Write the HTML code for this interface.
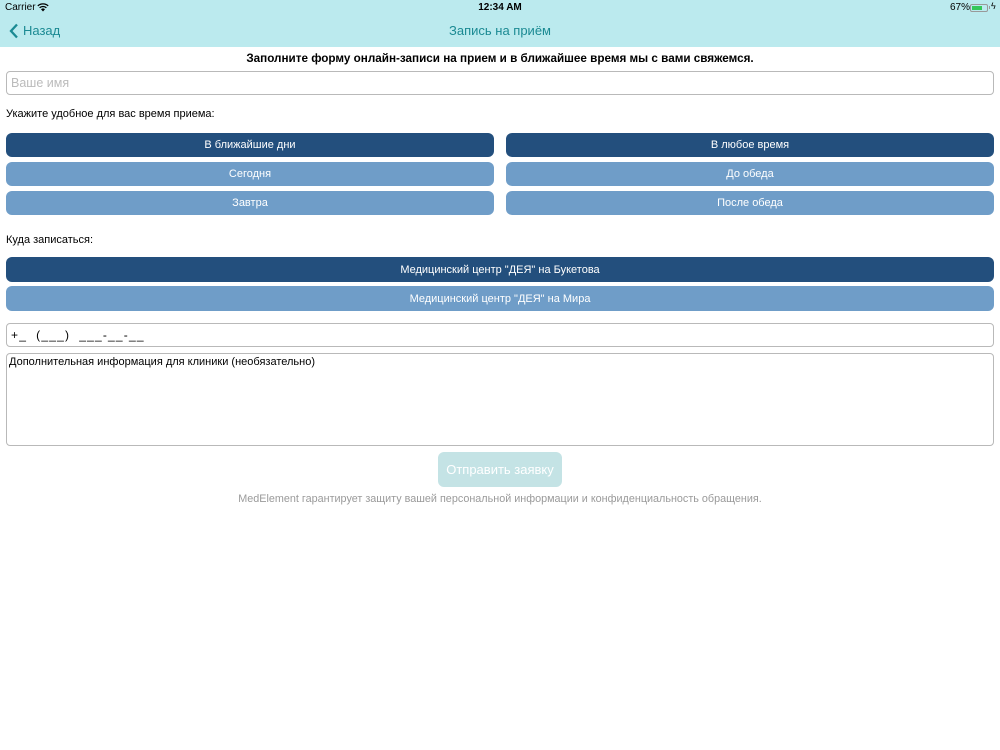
<!DOCTYPE html>
<html><head><meta charset="utf-8"><style>
*{box-sizing:border-box;margin:0;padding:0}
body{width:1000px;height:750px;background:#fff;font-family:"Liberation Sans",sans-serif;position:relative;overflow:hidden;color:#000}
.a{position:absolute}
.hdr{left:0;top:0;width:1000px;height:47px;background:#bbeaee}
.btn{position:absolute;border-radius:6px;color:#fff;font-size:11px;text-align:center;line-height:25px;height:24px}
.d{background:#234f7d}.l{background:#6f9dc8}
.inp{position:absolute;border:1px solid #b9b9b9;border-radius:4px;background:#fff}
</style></head><body>
<div class="a hdr"></div>
<div class="a" style="left:5px;top:2px;font-size:10px">Carrier</div>
<svg class="a" style="left:37px;top:3px" width="12" height="9" viewBox="0 0 12 9"><path d="M6 8.5L8 6.2A3 3 0 0 0 4 6.2Z" fill="#000"/><path d="M2.6 4.8A5 5 0 0 1 9.4 4.8M0.8 2.9A7.6 7.6 0 0 1 11.2 2.9" stroke="#000" stroke-width="1.3" fill="none"/></svg>
<div class="a" style="left:0;width:1000px;top:2px;text-align:center;font-size:10px;font-weight:bold">12:34 AM</div>
<div class="a" style="left:950px;top:2px;font-size:10px">67%</div>
<div class="a" style="left:970px;top:4px;width:18px;height:8px;border:1px solid #999;border-radius:2px"><div style="margin:1px;width:10px;height:4px;background:#34c759"></div></div>
<div class="a" style="left:989px;top:6px;width:1px;height:3px;background:#999"></div>
<div class="a" style="left:991px;top:1px;font-size:9px">ϟ</div>
<svg class="a" style="left:9px;top:23px" width="10" height="16" viewBox="0 0 10 16"><path d="M8 1.5L2 8L8 14.5" stroke="#1b8a93" stroke-width="2.3" fill="none"/></svg>
<div class="a" style="left:23px;top:23px;font-size:13px;color:#1b8a93">Назад</div>
<div class="a" style="left:0;width:1000px;top:23px;text-align:center;font-size:13px;color:#1b8a93">Запись на приём</div>
<div class="a" style="left:0;width:1000px;top:52px;text-align:center;font-size:11.7px;font-weight:bold">Заполните форму онлайн-записи на прием и в ближайшее время мы с вами свяжемся.</div>
<div class="inp" style="left:6px;top:71px;width:988px;height:24px"></div>
<div class="a" style="left:11px;top:76px;font-size:12.5px;color:#bbb">Ваше имя</div>
<div class="a" style="left:6px;top:108px;font-size:11px">Укажите удобное для вас время приема:</div>
<div class="btn d" style="left:6px;top:133px;width:488px">В ближайшие дни</div>
<div class="btn d" style="left:506px;top:133px;width:488px">В любое время</div>
<div class="btn l" style="left:6px;top:162px;width:488px">Сегодня</div>
<div class="btn l" style="left:506px;top:162px;width:488px">До обеда</div>
<div class="btn l" style="left:6px;top:191px;width:488px">Завтра</div>
<div class="btn l" style="left:506px;top:191px;width:488px">После обеда</div>
<div class="a" style="left:6px;top:234px;font-size:11px">Куда записаться:</div>
<div class="btn d" style="left:6px;top:257px;width:988px;height:25px;line-height:26px">Медицинский центр "ДЕЯ" на Букетова</div>
<div class="btn l" style="left:6px;top:286px;width:988px;height:25px;line-height:26px">Медицинский центр "ДЕЯ" на Мира</div>
<div class="inp" style="left:6px;top:323px;width:988px;height:24px"></div>
<div class="a" style="left:11px;top:328px;font-size:12px;white-space:pre;letter-spacing:1.2px">+_  (___)  ___-__-__</div>
<div class="inp" style="left:6px;top:353px;width:988px;height:93px"></div>
<div class="a" style="left:9px;top:356px;font-size:11px">Дополнительная информация для клиники (необязательно)</div>
<div class="a" style="left:438px;top:452px;width:124px;height:35px;background:#c4e3e5;border-radius:6px;color:#fff;font-size:13px;text-align:center;line-height:35px">Отправить заявку</div>
<div class="a" style="left:0;width:1000px;top:493px;text-align:center;font-size:10.8px;color:#9a9a9a">MedElement гарантирует защиту вашей персональной информации и конфиденциальность обращения.</div>
</body></html>
